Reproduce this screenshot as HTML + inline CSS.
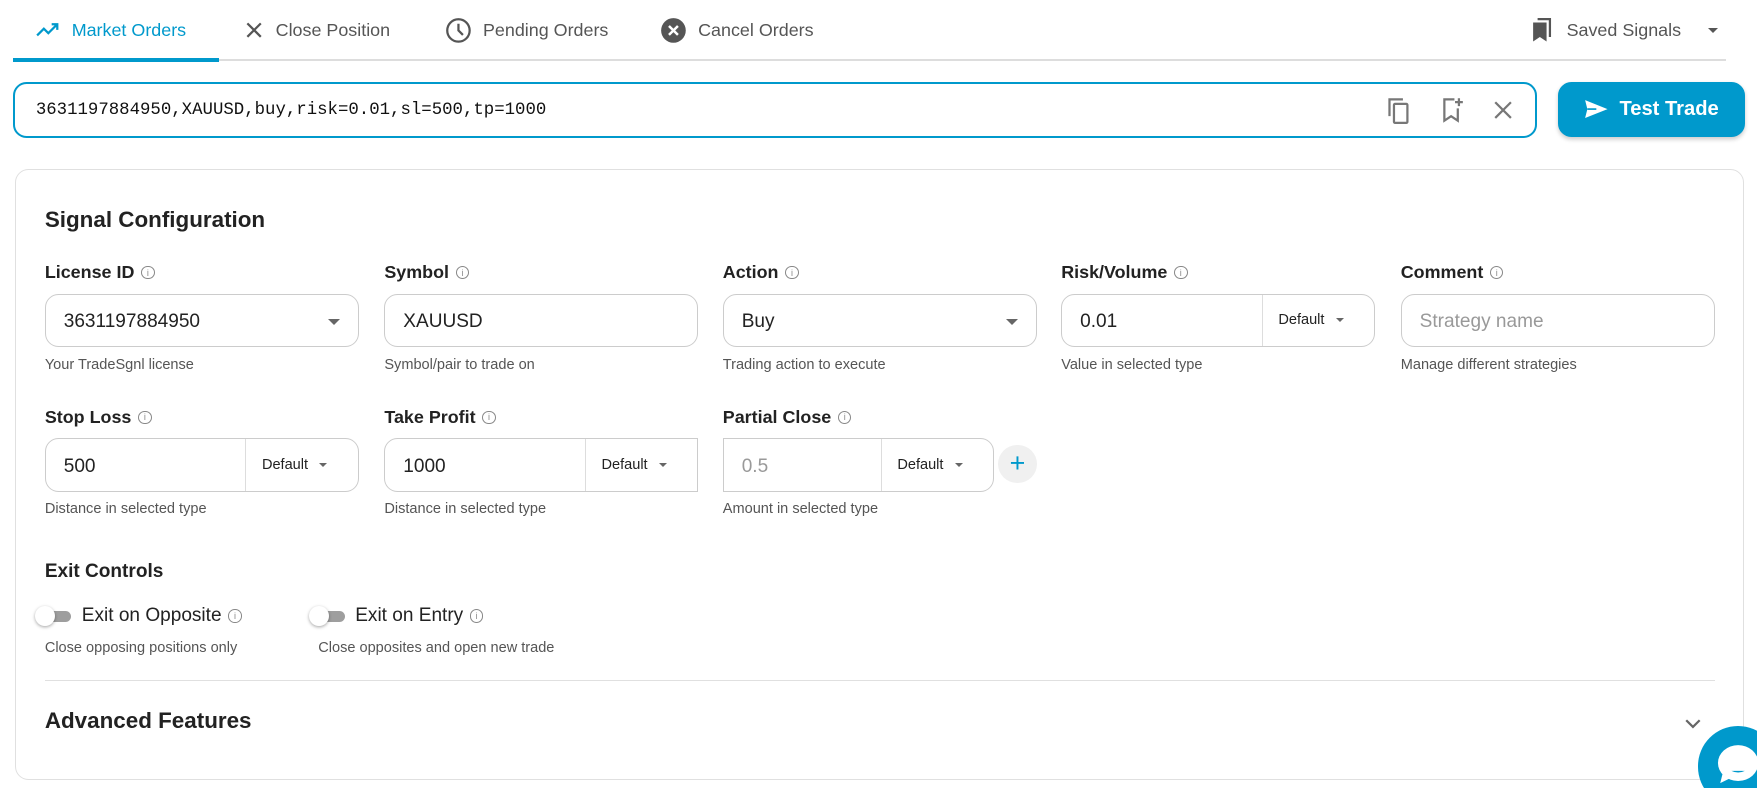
<!DOCTYPE html>
<html><head><meta charset="utf-8"><style>
*{box-sizing:border-box;margin:0;padding:0}
html,body{width:1757px;height:788px;overflow:hidden;background:#fff}
#w{zoom:1.1206;width:1568px;height:703px;position:relative;font-family:"Liberation Sans",sans-serif;color:#222}
.a{position:absolute}
.tab{position:absolute;top:16px;font-size:16px;color:#555;display:flex;align-items:center;gap:10px;height:22px}
.lbl{position:absolute;font-size:16px;font-weight:bold;color:#222;display:flex;align-items:center;gap:6px}
.i{width:12px;height:12px;border:1px solid #888;border-radius:50%;font-size:8px;color:#888;display:inline-flex;align-items:center;justify-content:center;font-weight:normal}
.inp{position:absolute;height:48px;border:1px solid #ccc;border-radius:12px;font-size:17px;display:flex;align-items:center;padding-left:16px;padding-top:3px;color:#222}
.h{position:absolute;font-size:13px;color:#555}
.dd{position:absolute;top:0;bottom:0;border-left:1px solid #ddd;font-size:13px;display:flex;align-items:center;padding-left:14px;color:#222}
.car{display:inline-block;width:0;height:0;border-left:4px solid transparent;border-right:4px solid transparent;border-top:4px solid #666;margin-left:10px}
.tg{position:absolute;width:34px;height:20px}
.tg .t{position:absolute;left:4px;top:5px;width:28px;height:10px;border-radius:5px;background:#9e9e9e}
.tg .k{position:absolute;left:0;top:1px;width:18px;height:18px;border-radius:50%;background:#fff;box-shadow:0 1px 3px rgba(0,0,0,.35)}
</style></head><body><div id="w">
<div class="tab" style="left:32px;color:#0099cc"><svg width="22" height="14" viewBox="0 0 22 14"><path d="M1 12l6-6 4 4 8-8M14 2h5v5" fill="none" stroke="#0099cc" stroke-width="2"/></svg>Market Orders</div>
<div class="tab" style="left:218px"><svg width="18" height="18" viewBox="0 0 18 18"><path d="M3 3l12 12M15 3L3 15" stroke="#555" stroke-width="2"/></svg>Close Position</div>
<div class="tab" style="left:397px"><svg width="24" height="24" viewBox="0 0 24 24"><circle cx="12" cy="12" r="10" fill="none" stroke="#555" stroke-width="2"/><path d="M12 6v6l4 4" fill="none" stroke="#555" stroke-width="2"/></svg>Pending Orders</div>
<div class="tab" style="left:589px"><svg width="24" height="24" viewBox="0 0 24 24"><circle cx="12" cy="12" r="11" fill="#555"/><path d="M8 8l8 8M16 8l-8 8" stroke="#fff" stroke-width="2.2"/></svg>Cancel Orders</div>
<div class="tab" style="left:1367px"><svg width="20" height="22" viewBox="0 0 20 22"><path d="M1 4h12v17l-6-4-6 4z" fill="#555"/><path d="M5 1h11v16" fill="none" stroke="#555" stroke-width="2"/></svg><span style="margin-left:1px">Saved Signals</span><span class="car" style="border-top-color:#555;border-width:5px 5px 0;margin-left:14px"></span></div>
<div class="a" style="left:12px;top:53px;width:1528px;height:1px;background:#ddd"></div>
<div class="a" style="left:12px;top:52px;width:183px;height:3px;background:#0099cc"></div>

<div class="a" style="left:12px;top:73px;width:1360px;height:50px;border:2px solid #0099cc;border-radius:12px"></div>
<div class="a" style="left:32px;top:90px;font-family:'Liberation Mono',monospace;font-size:15.5px;color:#111">3631197884950,XAUUSD,buy,risk=0.01,sl=500,tp=1000</div>
<svg class="a" style="left:1236px;top:86px" width="24" height="26" viewBox="0 0 24 26"><path d="M4 18V3h12" fill="none" stroke="#777" stroke-width="2"/><rect x="8" y="7" width="12" height="17" rx="1" fill="none" stroke="#777" stroke-width="2"/></svg>
<svg class="a" style="left:1286px;top:86px" width="22" height="24" viewBox="0 0 22 24"><path d="M12 3H3v19l6-4 6 4V11" fill="none" stroke="#777" stroke-width="2"/><path d="M16 2v7M12.5 5.5h7" stroke="#777" stroke-width="2"/></svg>
<svg class="a" style="left:1332px;top:89px" width="18" height="18" viewBox="0 0 18 18"><path d="M2 2l14 14M16 2L2 16" stroke="#777" stroke-width="2"/></svg>
<div class="a" style="left:1390px;top:73px;width:167px;height:49px;background:#0099cc;border-radius:12px;box-shadow:0 2px 4px rgba(0,0,0,.2);color:#fff;font-size:18px;font-weight:bold;display:flex;align-items:center;justify-content:center;gap:10px"><svg width="22" height="18" viewBox="0 0 22 18"><path d="M1 1l20 8-20 8 2-8z" fill="#fff"/><path d="M3 9h8" stroke="#0099cc" stroke-width="1.5"/></svg>Test Trade</div>

<div class="a" style="left:13px;top:151px;width:1543px;height:545px;border:1px solid #e0e0e0;border-radius:12px"></div>
<div class="a" style="left:40px;top:185px;font-size:20px;font-weight:bold;color:#222">Signal Configuration</div>

<div class="lbl" style="left:40px;top:234px">License ID <span class="i">i</span></div>
<div class="inp" style="left:40px;top:262px;width:280px">3631197884950<span class="car" style="position:absolute;right:16px;border-width:6px 6px 0"></span></div>
<div class="h" style="left:40px;top:319px">Your TradeSgnl license</div>

<div class="lbl" style="left:343px;top:234px">Symbol <span class="i">i</span></div>
<div class="inp" style="left:343px;top:262px;width:280px">XAUUSD</div>
<div class="h" style="left:343px;top:319px">Symbol/pair to trade on</div>

<div class="lbl" style="left:645px;top:234px">Action <span class="i">i</span></div>
<div class="inp" style="left:645px;top:262px;width:280px">Buy<span class="car" style="position:absolute;right:16px;border-width:6px 6px 0"></span></div>
<div class="h" style="left:645px;top:319px">Trading action to execute</div>

<div class="lbl" style="left:947px;top:234px">Risk/Volume <span class="i">i</span></div>
<div class="inp" style="left:947px;top:262px;width:280px">0.01<div class="dd" style="left:178px">Default<span class="car"></span></div></div>
<div class="h" style="left:947px;top:319px">Value in selected type</div>

<div class="lbl" style="left:1250px;top:234px">Comment <span class="i">i</span></div>
<div class="inp" style="left:1250px;top:262px;width:280px;color:#999">Strategy name</div>
<div class="h" style="left:1250px;top:319px">Manage different strategies</div>

<div class="lbl" style="left:40px;top:363px">Stop Loss <span class="i">i</span></div>
<div class="inp" style="left:40px;top:391px;width:280px">500<div class="dd" style="left:178px">Default<span class="car"></span></div></div>
<div class="h" style="left:40px;top:447px">Distance in selected type</div>

<div class="lbl" style="left:343px;top:363px">Take Profit <span class="i">i</span></div>
<div class="inp" style="left:343px;top:391px;width:280px;border-radius:12px 0 0 12px">1000<div class="dd" style="left:178px">Default<span class="car"></span></div></div>
<div class="h" style="left:343px;top:447px">Distance in selected type</div>

<div class="lbl" style="left:645px;top:363px">Partial Close <span class="i">i</span></div>
<div class="inp" style="left:645px;top:391px;width:242px;border-radius:0 12px 12px 0;color:#999">0.5<div class="dd" style="left:140px">Default<span class="car"></span></div></div>
<div class="a" style="left:891px;top:397px;width:34px;height:34px;border-radius:50%;background:#f0f0f0;color:#0099cc;font-size:24px;display:flex;align-items:center;justify-content:center;line-height:1">+</div>
<div class="h" style="left:645px;top:447px">Amount in selected type</div>

<div class="a" style="left:40px;top:501px;font-size:17px;font-weight:bold">Exit Controls</div>
<div class="tg" style="left:31px;top:540px"><div class="t"></div><div class="k"></div></div>
<div class="lbl" style="left:73px;top:540px;font-weight:normal;font-size:17px">Exit on Opposite <span class="i">i</span></div>
<div class="h" style="left:40px;top:571px">Close opposing positions only</div>
<div class="tg" style="left:276px;top:540px"><div class="t"></div><div class="k"></div></div>
<div class="lbl" style="left:317px;top:540px;font-weight:normal;font-size:17px">Exit on Entry <span class="i">i</span></div>
<div class="h" style="left:284px;top:571px">Close opposites and open new trade</div>

<div class="a" style="left:40px;top:607px;width:1490px;height:1px;background:#e0e0e0"></div>
<div class="a" style="left:40px;top:632px;font-size:20px;font-weight:bold">Advanced Features</div>
<svg class="a" style="left:1503px;top:641px" width="16" height="10" viewBox="0 0 16 10"><path d="M2 2l6 6 6-6" fill="none" stroke="#666" stroke-width="2"/></svg>

<div class="a" style="left:1515px;top:648px;width:72px;height:72px;border-radius:50%;background:#0099cc"></div>
<svg class="a" style="left:1525px;top:656px" width="45" height="45" viewBox="0 0 45 45"><ellipse cx="26" cy="25" rx="18" ry="16" fill="#fff"/><path d="M12 35l-2 8 10-5z" fill="#fff"/><path d="M20 32q6 3 12 0" fill="#0099cc"/></svg>
</div></body></html>
